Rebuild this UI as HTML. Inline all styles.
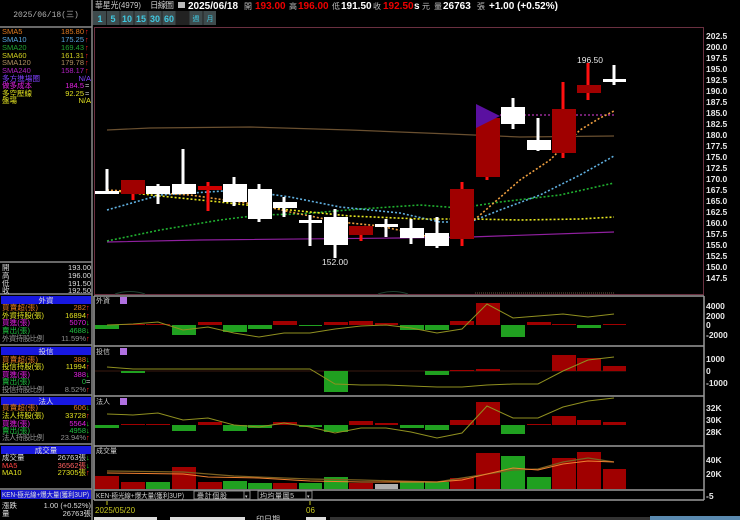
<!DOCTYPE html>
<html><head><meta charset="utf-8"><style>
html,body{margin:0;padding:0;background:#000;width:740px;height:520px;overflow:hidden}
svg{display:block}
text{font-family:"Liberation Sans","Noto Sans CJK TC",sans-serif}
.m{font-family:"Liberation Mono","Noto Sans CJK TC",monospace}
</style></head><body>
<svg width="740" height="520" viewBox="0 0 740 520" xmlns="http://www.w3.org/2000/svg">
<rect width="740" height="520" fill="#000"/>

<!-- LEFT PANEL -->
<g stroke="#8a8a8a" stroke-width="1.5" fill="none">
<line x1="92" y1="0" x2="92" y2="520"/>
<line x1="0" y1="27" x2="92" y2="27"/>
<line x1="0" y1="262" x2="92" y2="262"/>
<line x1="0" y1="294" x2="92" y2="294"/>
<line x1="0" y1="345" x2="92" y2="345"/>
<line x1="0" y1="395" x2="92" y2="395"/>
<line x1="0" y1="444" x2="92" y2="444"/>
<line x1="0" y1="489" x2="92" y2="489"/>
</g>
<text x="46" y="17" font-size="8" fill="#b0b0b0" text-anchor="middle" class="m">2025/06/18(三)</text>

<g font-size="7.5" class="m">
<text x="2" y="34" fill="#e07a20">SMA5</text><text x="84" y="34" fill="#e07a20" text-anchor="end">185.80</text>
<text x="2" y="42" fill="#5aa8e0">SMA10</text><text x="84" y="42" fill="#5aa8e0" text-anchor="end">175.25</text>
<text x="2" y="50" fill="#20a030">SMA20</text><text x="84" y="50" fill="#20a030" text-anchor="end">169.43</text>
<text x="2" y="58" fill="#d0d020">SMA60</text><text x="84" y="58" fill="#d0d020" text-anchor="end">161.31</text>
<text x="2" y="65" fill="#b09060">SMA120</text><text x="84" y="65" fill="#b09060" text-anchor="end">179.78</text>
<text x="2" y="73" fill="#b020c0">SMA240</text><text x="84" y="73" fill="#b020c0" text-anchor="end">158.17</text>
<text x="2" y="81" fill="#8040ff" textLength="38">多方進場圈</text><text x="91" y="81" fill="#8040ff" text-anchor="end">N/A</text>
<text x="2" y="88" fill="#e020e0" textLength="30">做多成本</text><text x="84" y="88" fill="#e020e0" text-anchor="end">184.5</text><text x="85" y="88" fill="#ccc">=</text>
<text x="2" y="96" fill="#e0e020" textLength="30">多空壓線</text><text x="84" y="96" fill="#e0e020" text-anchor="end">92.25</text><text x="85" y="96" fill="#ccc">=</text>
<text x="2" y="103" fill="#e0e020" textLength="15">盤場</text><text x="91" y="103" fill="#e0e020" text-anchor="end">N/A</text>
<g fill="#ff2020"><text x="85" y="34">↑</text><text x="85" y="42">↑</text><text x="85" y="50">↑</text><text x="85" y="58">↑</text><text x="85" y="65">↑</text><text x="85" y="73">↑</text></g>

<text x="2" y="270" fill="#ddd">開</text><text x="91" y="270" fill="#ddd" text-anchor="end">193.00</text>
<text x="2" y="278" fill="#ddd">高</text><text x="91" y="278" fill="#ddd" text-anchor="end">196.00</text>
<text x="2" y="286" fill="#ddd">低</text><text x="91" y="286" fill="#ddd" text-anchor="end">191.50</text>
<text x="2" y="293" fill="#ddd">收</text><text x="91" y="293" fill="#ddd" text-anchor="end">192.50</text>
</g>

<!-- section headers -->
<g>
<rect x="1" y="296" width="90" height="8" fill="#1818e0"/>
<rect x="1" y="347" width="90" height="8" fill="#1818e0"/>
<rect x="1" y="397" width="90" height="8" fill="#1818e0"/>
<rect x="1" y="446" width="90" height="8" fill="#1818e0"/>
<rect x="1" y="490" width="90" height="9" fill="#1818d0"/>
</g>
<g font-size="7.5" class="m">
<text x="46" y="303" fill="#ddd" text-anchor="middle">外資</text>
<text x="46" y="354" fill="#ddd" text-anchor="middle">投信</text>
<text x="46" y="404" fill="#ddd" text-anchor="middle">法人</text>
<text x="46" y="453" fill="#ddd" text-anchor="middle">成交量</text>
<text x="2" y="497" fill="#ddd" font-size="7" textLength="87" lengthAdjust="spacingAndGlyphs">KEN-極光線+爆大量(獲利3UP)</text>

<text x="2" y="310" fill="#e07a20" textLength="36">買賣超(張)</text><text x="86" y="310" fill="#e07a20" text-anchor="end">282</text><text x="86" y="310" fill="#f22">↑</text>
<text x="2" y="318" fill="#e0e020" textLength="42">外資持股(張)</text><text x="86" y="318" fill="#e0e020" text-anchor="end">16894</text><text x="86" y="318" fill="#f22">↑</text>
<text x="2" y="325" fill="#e020e0" textLength="28">買進(張)</text><text x="86" y="325" fill="#e020e0" text-anchor="end">5070</text><text x="86" y="325" fill="#2d2">↓</text>
<text x="2" y="333" fill="#20c040" textLength="28">賣出(張)</text><text x="86" y="333" fill="#20c040" text-anchor="end">4688</text><text x="86" y="333" fill="#2d2">↓</text>
<text x="2" y="341" fill="#909090" textLength="42">外資持股比例</text><text x="86" y="341" fill="#909090" text-anchor="end">11.59%</text><text x="86" y="341" fill="#f22">↑</text>

<text x="2" y="362" fill="#e07a20" textLength="36">買賣超(張)</text><text x="86" y="362" fill="#e07a20" text-anchor="end">388</text><text x="86" y="362" fill="#2d2">↓</text>
<text x="2" y="369" fill="#e0e020" textLength="42">投信持股(張)</text><text x="86" y="369" fill="#e0e020" text-anchor="end">11994</text><text x="86" y="369" fill="#f22">↑</text>
<text x="2" y="377" fill="#e020e0" textLength="28">買進(張)</text><text x="86" y="377" fill="#e020e0" text-anchor="end">388</text><text x="86" y="377" fill="#2d2">↓</text>
<text x="2" y="384" fill="#20c040" textLength="28">賣出(張)</text><text x="86" y="384" fill="#20c040" text-anchor="end">0</text><text x="86" y="384" fill="#ccc">=</text>
<text x="2" y="392" fill="#909090" textLength="42">投信持股比例</text><text x="86" y="392" fill="#909090" text-anchor="end">8.52%</text><text x="86" y="392" fill="#f22">↑</text>

<text x="2" y="410" fill="#e07a20" textLength="36">買賣超(張)</text><text x="86" y="410" fill="#e07a20" text-anchor="end">606</text><text x="86" y="410" fill="#2d2">↓</text>
<text x="2" y="418" fill="#e0e020" textLength="42">法人持股(張)</text><text x="86" y="418" fill="#e0e020" text-anchor="end">33728</text><text x="86" y="418" fill="#f22">↑</text>
<text x="2" y="426" fill="#e020e0" textLength="28">買進(張)</text><text x="86" y="426" fill="#e020e0" text-anchor="end">5564</text><text x="86" y="426" fill="#2d2">↓</text>
<text x="2" y="433" fill="#20c040" textLength="28">賣出(張)</text><text x="86" y="433" fill="#20c040" text-anchor="end">4958</text><text x="86" y="433" fill="#2d2">↓</text>
<text x="2" y="440" fill="#909090" textLength="42">法人持股比例</text><text x="86" y="440" fill="#909090" text-anchor="end">23.94%</text><text x="86" y="440" fill="#f22">↑</text>

<text x="2" y="460" fill="#ddd">成交量</text><text x="86" y="460" fill="#ddd" text-anchor="end">26763張</text><text x="86" y="460" fill="#2d2">↓</text>
<text x="2" y="468" fill="#ff4040">MA5</text><text x="86" y="468" fill="#ff6060" text-anchor="end">36562張</text><text x="86" y="468" fill="#2d2">↓</text>
<text x="2" y="475" fill="#e0e020">MA10</text><text x="86" y="475" fill="#e0e020" text-anchor="end">27305張</text><text x="86" y="475" fill="#f22">↑</text>

<text x="2" y="508" fill="#ddd">漲跌</text><text x="91" y="508" fill="#ddd" text-anchor="end">1.00 (+0.52%)</text>
<text x="2" y="516" fill="#ddd">量</text><text x="91" y="516" fill="#ddd" text-anchor="end">26763張</text>
</g>

<!-- HEADER -->
<g font-size="8.5" class="m" fill="#ccc">
<text x="95" y="8" textLength="46" lengthAdjust="spacingAndGlyphs">華星光(4979)</text>
<text x="150" y="8" textLength="24">日線圖</text>
</g>
<rect x="178" y="2" width="7" height="6" fill="#bbb"/>
<g font-size="10" font-weight="bold">
<text x="188" y="9" fill="#fff">2025/06/18</text>
<text x="244" y="9" fill="#bbb" font-size="8" font-weight="normal">開</text><text x="255" y="9" fill="#e00">193.00</text>
<text x="289" y="9" fill="#bbb" font-size="8" font-weight="normal">高</text><text x="298" y="9" fill="#e00">196.00</text>
<text x="332" y="9" fill="#bbb" font-size="8" font-weight="normal">低</text><text x="341" y="9" fill="#fff">191.50</text>
<text x="373" y="9" fill="#bbb" font-size="8" font-weight="normal">收</text><text x="383" y="9" fill="#e00">192.50</text>
<text x="414" y="9" fill="#fff">s</text><text x="422" y="9" fill="#bbb" font-size="8" font-weight="normal">元</text>
<text x="434" y="9" fill="#bbb" font-size="8" font-weight="normal">量</text><text x="443" y="9" fill="#fff">26763</text>
<text x="477" y="9" fill="#bbb" font-size="8" font-weight="normal">張</text>
<text x="489" y="9" fill="#fff">+1.00 (+0.52%)</text>
</g>
<!-- toolbar -->
<g>
<rect x="93" y="11" width="123" height="14" fill="#3e4a4c"/>
<g stroke="#222" stroke-width="1"><line x1="106.5" y1="11" x2="106.5" y2="25"/><line x1="120" y1="11" x2="120" y2="25"/><line x1="134" y1="11" x2="134" y2="25"/><line x1="148" y1="11" x2="148" y2="25"/><line x1="162" y1="11" x2="162" y2="25"/><line x1="176" y1="11" x2="176" y2="25"/><line x1="189" y1="11" x2="189" y2="25"/><line x1="203" y1="11" x2="203" y2="25"/></g>
<rect x="176.5" y="11" width="12" height="14" fill="#222"/>
<g font-size="9" font-weight="bold" fill="#40c8e0" text-anchor="middle">
<text x="100" y="22">1</text><text x="113" y="22">5</text><text x="127" y="22">10</text><text x="141" y="22">15</text><text x="155" y="22">30</text><text x="169" y="22">60</text>
<text x="196" y="21" font-size="7" font-weight="normal">週</text><text x="210" y="21" font-size="7" font-weight="normal">月</text>
</g>
</g>

<!-- MAIN CHART FRAME -->
<rect x="94.5" y="27.5" width="609" height="267" fill="none" stroke="#6a3040" stroke-width="1"/>
<g font-size="8.5" fill="#e8e8e8" font-weight="bold">
<text x="706" y="39">202.5</text><text x="706" y="50">200.0</text><text x="706" y="61">197.5</text><text x="706" y="72">195.0</text><text x="706" y="83">192.5</text><text x="706" y="94">190.0</text><text x="706" y="105">187.5</text><text x="706" y="116">185.0</text><text x="706" y="127">182.5</text><text x="706" y="138">180.0</text><text x="706" y="149">177.5</text><text x="706" y="160">175.0</text><text x="706" y="171">172.5</text><text x="706" y="182">170.0</text><text x="706" y="193">167.5</text><text x="706" y="204">165.0</text><text x="706" y="215">162.5</text><text x="706" y="226">160.0</text><text x="706" y="237">157.5</text><text x="706" y="248">155.0</text><text x="706" y="259">152.5</text><text x="706" y="270">150.0</text><text x="706" y="281">147.5</text>
</g>

<!-- MAs -->
<polyline points="107,130 150,128 250,127 350,130 450,134 520,137 614,136" fill="none" stroke="#6a5030" stroke-width="1.2"/>
<polyline points="107,242 200,240 400,238 470,237 614,232" fill="none" stroke="#9020a0" stroke-width="1.2"/>
<polyline points="500,115 614,115" fill="none" stroke="#e040e0" stroke-width="1" stroke-dasharray="2,2"/>
<g fill="none" stroke-width="1.6" stroke-dasharray="2,2">
<polyline points="107,241 160,230 220,220 260,215 300,214 360,209 420,205 460,208 500,202 560,195 614,183" stroke="#20b030"/>
<polyline points="107,210 160,195 240,190 290,197 340,207 400,213 440,222 470,222 500,210 540,195 580,175 614,156" stroke="#60b0e0"/>
<polyline points="107,190 160,196 220,202 290,210 350,216 420,219 470,219 520,220 580,219 614,217" stroke="#e8e820"/>
<polyline points="107,190 140,192 190,195 260,205 290,212 340,222 380,226 430,237 460,232 480,215 520,180 550,160 580,130 600,118 614,111" stroke="#f0a040"/>
</g>

<!-- candles -->
<g>
<g fill="#fff">
<rect x="105.5" y="169" width="3" height="24"/><rect x="95" y="191" width="24" height="3"/>
<rect x="156.5" y="184" width="3" height="20"/><rect x="146" y="186" width="24" height="8"/>
<rect x="181.5" y="149" width="3" height="45"/><rect x="172" y="184" width="24" height="10"/>
<rect x="232.5" y="177" width="3" height="29"/><rect x="223" y="184" width="24" height="18"/>
<rect x="257.5" y="184" width="3" height="38"/><rect x="248" y="189" width="24" height="30"/>
<rect x="282.5" y="197" width="3" height="20"/><rect x="273" y="202" width="24" height="6"/>
<rect x="308.5" y="215" width="3" height="31"/><rect x="299" y="220" width="23" height="3"/>
<rect x="333.5" y="209" width="3" height="49"/><rect x="324" y="217" width="24" height="28"/>
<rect x="384.5" y="219" width="3" height="18"/><rect x="375" y="224" width="23" height="3"/>
<rect x="409.5" y="219" width="3" height="25"/><rect x="400" y="228" width="24" height="10"/>
<rect x="435.5" y="217" width="3" height="31"/><rect x="425" y="233" width="24" height="13"/>
<rect x="511.5" y="98" width="3" height="31"/><rect x="501" y="107" width="24" height="17"/>
<rect x="536.5" y="118" width="3" height="33"/><rect x="527" y="140" width="24" height="10"/>
<rect x="612.5" y="65" width="3" height="20"/><rect x="603" y="79" width="23" height="3"/>
</g>
<g fill="#ff1010">
<rect x="131.5" y="180" width="3" height="20"/>
<rect x="206.5" y="182" width="3" height="29"/>
<rect x="359.5" y="226" width="3" height="15"/>
<rect x="460.5" y="182" width="3" height="64"/>
<rect x="485.5" y="115" width="3" height="65"/>
<rect x="561.5" y="82" width="3" height="76"/>
<rect x="586.5" y="63" width="3" height="37"/>
</g>
<g fill="#a00000">
<rect x="121" y="180" width="24" height="14"/>
<rect x="349" y="226" width="24" height="9"/>
<rect x="450" y="189" width="24" height="50"/>
<rect x="476" y="118" width="24" height="59"/>
<rect x="552" y="109" width="24" height="44"/>
<rect x="577" y="85" width="24" height="8"/>
</g>
<rect x="198" y="186" width="24" height="4" fill="#d00000"/>
<polygon points="476,104 500,116 476,128" fill="#5a10a0"/>
</g>
<g font-size="8.5" fill="#e8e8e8">
<text x="322" y="265">152.00</text>
<text x="577" y="63">196.50</text>
</g>
<path d="M115 294 Q130 289 145 294 M378 294 Q393 289 408 294" fill="none" stroke="#204030" stroke-width="1"/>
<line x1="475" y1="293" x2="614" y2="293" stroke="#6a5a40" stroke-dasharray="1,1"/>

<!-- SUB PANELS frames -->
<g stroke="#9a9a9a" stroke-width="1.5" fill="none">
<line x1="94" y1="296" x2="704" y2="296"/>
<line x1="94" y1="346" x2="704" y2="346"/>
<line x1="94" y1="396" x2="704" y2="396"/>
<line x1="94" y1="446" x2="704" y2="446"/>
<line x1="94" y1="490" x2="704" y2="490"/>
<line x1="94" y1="500" x2="704" y2="500"/>
<line x1="704" y1="296" x2="704" y2="500"/>
<line x1="94" y1="296" x2="94" y2="500"/>
</g>
<g font-size="7" class="m" fill="#ccc">
<text x="96" y="303">外資</text><text x="96" y="354">投信</text><text x="96" y="404">法人</text><text x="96" y="453">成交量</text>
</g>
<g fill="#b070e0"><rect x="120" y="297" width="7" height="7"/><rect x="120" y="348" width="7" height="7"/><rect x="120" y="398" width="7" height="7"/></g>
<g font-size="8.5" fill="#e8e8e8" font-weight="bold">
<text x="706" y="309">4000</text><text x="706" y="319">2000</text><text x="706" y="328">0</text><text x="706" y="338">-2000</text>
<text x="706" y="362">1000</text><text x="706" y="374">0</text><text x="706" y="386">-1000</text>
<text x="706" y="411">32K</text><text x="706" y="423">30K</text><text x="706" y="435">28K</text>
<text x="706" y="463">40K</text><text x="706" y="477">20K</text><text x="706" y="499">-5</text>
</g>

<!-- 外資 bars -->
<g>
<g fill="#20a020">
<rect x="95" y="325" width="24" height="4"/><rect x="172" y="325" width="24" height="10"/><rect x="223" y="325" width="24" height="7"/><rect x="248" y="325" width="24" height="4"/><rect x="299" y="325" width="23" height="1"/><rect x="400" y="325" width="24" height="5"/><rect x="425" y="325" width="24" height="5"/><rect x="501" y="325" width="24" height="12"/><rect x="577" y="325" width="24" height="3"/>
</g>
<g fill="#a00000">
<rect x="121" y="324" width="24" height="1"/><rect x="146" y="324" width="24" height="1"/><rect x="198" y="322" width="24" height="3"/><rect x="273" y="321" width="24" height="4"/><rect x="324" y="322" width="24" height="3"/><rect x="349" y="321" width="24" height="4"/><rect x="375" y="323" width="23" height="2"/><rect x="450" y="321" width="24" height="4"/><rect x="476" y="303" width="24" height="22"/><rect x="527" y="322" width="24" height="3"/><rect x="552" y="324" width="24" height="1"/><rect x="603" y="324" width="23" height="1"/>
</g>
<polyline points="107,325 133,324 158,322 183,330 208,327 234,333 259,337 284,333 310,333 335,329 361,326 386,325 411,328 437,333 462,329 487,304 513,318 538,316 563,314 588,317 614,314" fill="none" stroke="#909020" stroke-width="1"/>
</g>

<!-- 投信 bars -->
<g>
<line x1="95" y1="371" x2="626" y2="371" stroke="#3a1a10" stroke-width="1"/>
<g fill="#20a020"><rect x="121" y="371" width="24" height="2"/><rect x="324" y="371" width="24" height="21"/><rect x="425" y="371" width="24" height="4"/></g>
<g fill="#a00000"><rect x="450" y="370" width="24" height="1"/><rect x="476" y="369" width="24" height="2"/><rect x="552" y="355" width="24" height="16"/><rect x="577" y="358" width="24" height="13"/><rect x="603" y="366" width="23" height="5"/></g>
<polyline points="107,367 133,369 310,369 335,384 361,385 386,385 411,386 437,387 462,387 487,385 513,384 538,384 563,371 588,360 614,357" fill="none" stroke="#909020" stroke-width="1"/>
</g>

<!-- 法人 bars -->
<g>
<g fill="#20a020"><rect x="95" y="425" width="24" height="3"/><rect x="172" y="425" width="24" height="6"/><rect x="223" y="425" width="24" height="6"/><rect x="248" y="425" width="24" height="3"/><rect x="299" y="425" width="23" height="2"/><rect x="324" y="425" width="24" height="7"/><rect x="400" y="425" width="24" height="3"/><rect x="425" y="425" width="24" height="5"/><rect x="501" y="425" width="24" height="9"/></g>
<g fill="#a00000"><rect x="121" y="424" width="24" height="1"/><rect x="146" y="424" width="24" height="1"/><rect x="198" y="422" width="24" height="3"/><rect x="273" y="422" width="24" height="3"/><rect x="349" y="421" width="24" height="4"/><rect x="375" y="423" width="23" height="2"/><rect x="450" y="420" width="24" height="5"/><rect x="476" y="402" width="24" height="23"/><rect x="527" y="424" width="24" height="1"/><rect x="552" y="416" width="24" height="9"/><rect x="577" y="420" width="24" height="5"/><rect x="603" y="422" width="23" height="3"/></g>
<polyline points="107,414 133,415 158,413 183,420 208,418 234,425 259,427 284,423 310,427 335,433 361,428 386,428 411,432 437,438 462,433 487,406 513,418 538,418 563,407 588,401 614,398" fill="none" stroke="#909020" stroke-width="1"/>
</g>

<!-- Volume -->
<g>
<g fill="#a00000"><rect x="95" y="476" width="24" height="13"/><rect x="121" y="482" width="24" height="7"/><rect x="172" y="467" width="24" height="22"/><rect x="198" y="482" width="24" height="7"/><rect x="273" y="483" width="24" height="6"/><rect x="349" y="483" width="24" height="6"/><rect x="450" y="478" width="24" height="11"/><rect x="476" y="453" width="24" height="36"/><rect x="552" y="458" width="24" height="31"/><rect x="577" y="452" width="24" height="37"/><rect x="603" y="469" width="23" height="20"/></g>
<g fill="#20a020"><rect x="146" y="482" width="24" height="7"/><rect x="223" y="481" width="24" height="8"/><rect x="248" y="483" width="24" height="6"/><rect x="299" y="483" width="23" height="6"/><rect x="324" y="477" width="24" height="12"/><rect x="400" y="482" width="24" height="7"/><rect x="425" y="482" width="24" height="7"/><rect x="501" y="456" width="24" height="33"/><rect x="527" y="477" width="24" height="12"/></g>
<rect x="375" y="484" width="23" height="5" fill="#b0b0b0"/>
<polyline points="107,471 183,472 234,476 310,479 361,480 437,482 462,478 513,470 538,469 563,462 588,458 614,462" fill="none" stroke="#7a6020" stroke-width="1.2"/>
<polyline points="107,473 183,474 208,477 259,478 310,481 361,482 437,482 462,480 487,474 513,468 538,470 563,464 588,461 614,462" fill="none" stroke="#f08030" stroke-width="1"/>
</g>

<!-- bottom row in chart -->
<g font-size="7" class="m">
<text x="96" y="498" fill="#ccc" textLength="88" lengthAdjust="spacingAndGlyphs">KEN-極光線+爆大量(獲利3UP)</text>
<rect x="194" y="491" width="50" height="8" fill="#000" stroke="#888"/><text x="197" y="498" fill="#ccc" textLength="30">疊計個股</text>
<rect x="244" y="491" width="6" height="8" fill="#000" stroke="#888"/><text x="245" y="498" fill="#ccc" font-size="5">▾</text>
<rect x="258" y="491" width="48" height="8" fill="#000" stroke="#888"/><text x="260" y="498" fill="#ccc" textLength="34">均均量圖5</text>
<rect x="306" y="491" width="6" height="8" fill="#000" stroke="#888"/><text x="307" y="498" fill="#ccc" font-size="5">▾</text>
</g>
<line x1="107" y1="501" x2="107" y2="505" stroke="#c8c820"/>
<line x1="310" y1="501" x2="310" y2="505" stroke="#c8c820"/>
<g font-size="8" fill="#c8c820"><text x="95" y="513">2025/05/20</text><text x="306" y="513">06</text></g>

<!-- bottom strip -->
<rect x="94" y="517" width="63" height="3" fill="#ddd"/>
<rect x="170" y="517" width="75" height="3" fill="#ddd"/>
<rect x="306" y="517" width="20" height="3" fill="#ddd"/>
<rect x="330" y="517" width="330" height="3" fill="#333"/>
<text x="256" y="522" font-size="8" fill="#ccc">印日期</text>
<rect x="650" y="516" width="90" height="4" fill="#5a8ab0"/>
</svg>
</body></html>
